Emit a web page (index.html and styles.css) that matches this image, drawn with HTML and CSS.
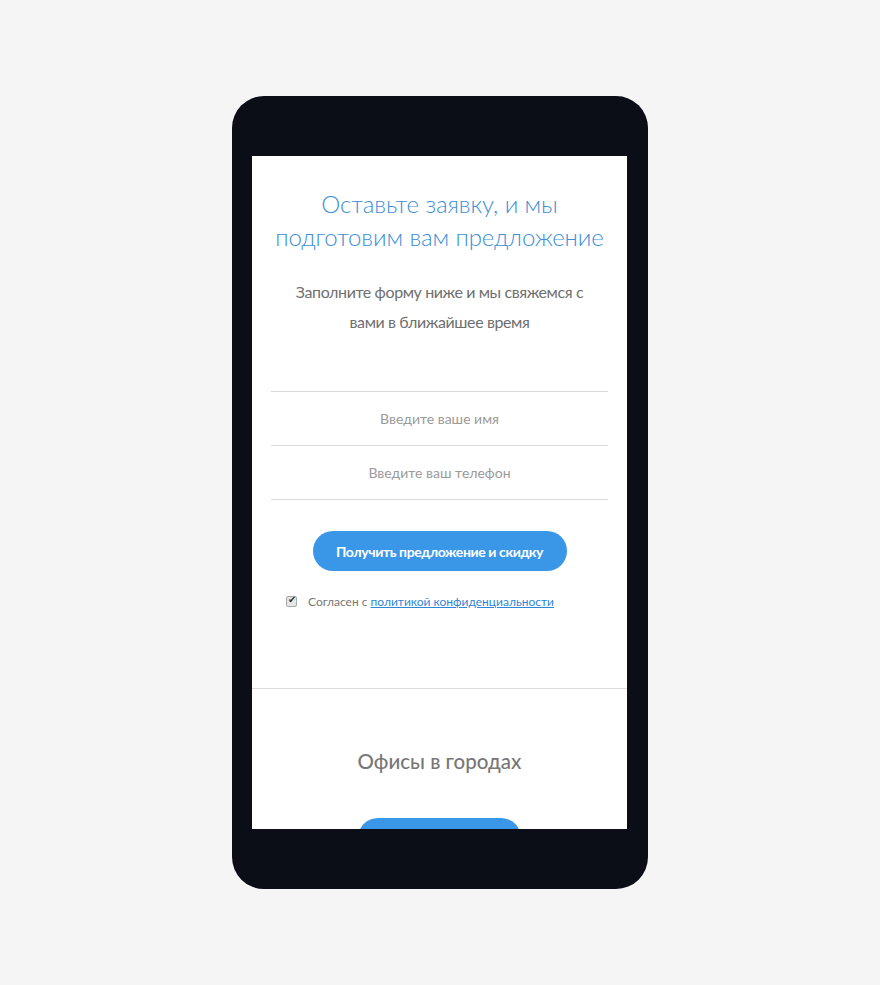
FILE: index.html
```html
<!DOCTYPE html>
<html lang="ru">
<head>
    <meta charset="UTF-8">
    <meta name="viewport" content="width=device-width, initial-scale=1.0">
    <title>Оставьте заявку</title>
    <link rel="stylesheet" href="styles.css">
</head>
<body>
    <div class="phone">
        <div class="screen">
            <div class="order">
                <h2 class="order-title">Оставьте заявку, и мы подготовим вам предложение</h2>
                <p class="order-text">Заполните форму ниже и мы свяжемся с вами в ближайшее время</p>

                <form class="order-form">
                    <input type="text" class="field" placeholder="Введите ваше имя">
                    <input type="tel" class="field" placeholder="Введите ваш телефон">
                    <button type="button" class="btn">Получить предложение и скидку</button>
                    <label class="agree">
                        <input type="checkbox" checked>
                        <span>Согласен с <a href="#">политикой конфиденциальности</a></span>
                    </label>
                </form>
            </div>

            <div class="offices">
                <h3 class="offices-title">Офисы в городах</h3>
                <button type="button" class="btn btn-city" aria-label="Выбрать город"></button>
            </div>
        </div>
    </div>
</body>
</html>
```

FILE: styles.css
```css
body {
    margin: 0;
    background-color: #f5f5f5;
    font-family: Lato, "Open Sans", sans-serif;
}
.phone {
    width: 375px;
    margin: 96px auto 0;
    padding: 60px 21px 60px 20px;
    background-color: #0b0d17;
    border-radius: 32px;
}
.screen {
    height: 673px;
    background-color: white;
    overflow: hidden;
}
.order {
    padding: 31px 19px 0;
    text-align: center;
    border-bottom: 1px solid #dcdcdc;
    height: 501px;
}
.order-title {
    margin: 0;
    font-size: 24px;
    font-weight: 300;
    line-height: 33px;
    color: #3d8fd8;
    letter-spacing: -0.1px;
}
.order-text {
    margin: 24px 20px 0;
    font-size: 16px;
    line-height: 30px;
    color: #6f6f6f;
    letter-spacing: -0.4px;
}
.order-form {
    margin-top: 54px;
    display: flex;
    flex-direction: column;
    align-items: center;
}
.field {
    width: 100%;
    height: 54px;
    box-sizing: border-box;
    border: none;
    border-top: 1px solid #d9d9d9;
    text-align: center;
    font-family: inherit;
    font-size: 14px;
    color: #555;
    outline: none;
}
.field:last-of-type {
    height: 55px;
    border-bottom: 1px solid #d9d9d9;
}
.field::placeholder {
    color: #9a9a9a;
}
.btn {
    background-color: #3a97e8;
    color: white;
    border: none;
    border-radius: 20px;
    height: 40px;
    padding: 0;
    font-family: inherit;
    font-size: 14px;
    font-weight: bold;
    letter-spacing: -0.4px;
    cursor: pointer;
}
.order-form .btn {
    margin-top: 31px;
    width: 254px;
}
.agree {
    align-self: flex-start;
    margin: 23px 0 0 15px;
    display: flex;
    align-items: center;
    gap: 11px;
    font-size: 12px;
    color: #777;
}
.agree input {
    appearance: none;
    margin: 0;
    width: 11px;
    height: 11px;
    border: 1px solid #a8a8a8;
    border-radius: 2px;
    background-color: #e6e6e6;
    position: relative;
}
.agree input:checked::after {
    content: "✔";
    position: absolute;
    left: 1px;
    top: -3px;
    font-size: 10px;
    color: #333;
}
.agree a {
    color: #2f86d6;
}
.offices {
    text-align: center;
    padding-top: 60px;
}
.offices-title {
    margin: 0;
    font-size: 20.5px;
    font-weight: 500;
    color: #777;
}
.btn-city {
    margin-top: 45px;
    width: 163px;
}
```
